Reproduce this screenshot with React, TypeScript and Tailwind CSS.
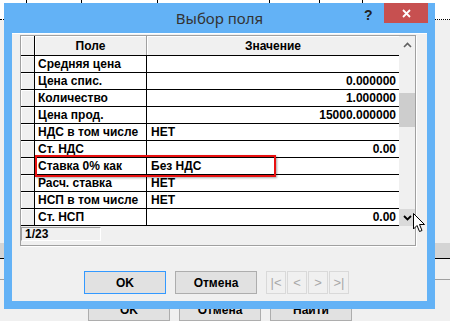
import React from "react";

const rows: [string, string, "l" | "r"][] = [
  ["Средняя цена", "", "l"],
  ["Цена спис.", "0.000000", "r"],
  ["Количество", "1.000000", "r"],
  ["Цена прод.", "15000.000000", "r"],
  ["НДС в том числе", "НЕТ", "l"],
  ["Ст. НДС", "0.00", "r"],
  ["Ставка 0% как", "Без НДС", "l"],
  ["Расч. ставка", "НЕТ", "l"],
  ["НСП в том числе", "НЕТ", "l"],
  ["Ст. НСП", "0.00", "r"],
];

const sans = "font-['Liberation_Sans',Arial,sans-serif]";

export default function App() {
  return (
    <div className={`relative w-[450px] h-[321px] overflow-hidden bg-[#f0f0f0] ${sans}`}>
      {/* background application */}
      <div className="flex flex-col">
        <div className="flex h-[20px] bg-white border-b border-dotted border-black">
          <div className="w-[27px] border-r border-black" />
          <div className="w-[55px] border-r border-black" />
          <div className="w-[76px] border-r border-black" />
          <div className="w-[112px] border-r border-black" />
          <div className="w-[50px] border-r border-black" />
          <div className="w-[43px] border-r border-black" />
          <div className="flex-1" />
        </div>
        <div className="h-[223px]" />
        <div className="h-[16px] bg-[#d4d4d4] border-b border-black" />
        <div className="h-[21px] border-b border-[#a0a0a0]" />
        <div className="flex gap-[9px] pl-[88px] pt-[18px] text-[12px] font-bold text-black">
          <div className="w-[82px] h-[23px] border border-[#adadad] bg-[#e1e1e1] flex items-center justify-center">OK</div>
          <div className="w-[82px] h-[23px] border border-[#adadad] bg-[#e1e1e1] flex items-center justify-center">Отмена</div>
          <div className="w-[82px] h-[23px] border border-[#adadad] bg-[#e1e1e1] flex items-center justify-center">Найти</div>
        </div>
      </div>

      {/* dialog window */}
      <div className="absolute left-[4px] top-[3px] w-[431px] h-[306px] bg-[#63b2f6] flex flex-col">
        <div className="relative h-[30px] flex items-center justify-center">
          <span className="font-['Noto_Sans',sans-serif] text-[15px] text-[#333] pt-[1px]">Выбор поля</span>
          <span className="absolute left-[360px] top-[2px] text-[14px] font-bold text-[#222]">?</span>
          <div className="absolute left-[380px] top-0 w-[44px] h-[20px] bg-[#c75050] flex items-center justify-center">
            <svg width="9" height="9" viewBox="0 0 9 9">
              <path d="M1 1 L8 8 M8 1 L1 8" stroke="#fff" strokeWidth="1.8" />
            </svg>
          </div>
        </div>
        <div className="mx-[8px] h-[268px] bg-[#f0f0f0] shadow-[inset_0_1px_0_#fff] flex flex-col pt-[2px] pl-[8px]">
          {/* grid frame */}
          <div className="relative w-[396px] h-[211px] border border-[#a0a0a0] shadow-[1px_1px_0_#fff] flex flex-col">
            <div className="flex h-[190px]">
              <div className="w-[378px] flex flex-col text-[12px] font-bold text-black leading-[16px]">
                <div className="flex h-[20px] border-b border-black bg-[#f0f0f0]">
                  <div className="w-[14px] border-r border-black shadow-[inset_1px_1px_0_#fff]" />
                  <div className="w-[112px] border-r border-[#a0a0a0] shadow-[inset_1px_1px_0_#fff] flex items-center justify-center">Поле</div>
                  <div className="flex-1 flex items-center justify-center shadow-[inset_1px_1px_0_#fff]">Значение</div>
                </div>
                {rows.map(([n, v, a], i) => (
                  <div key={i} className="flex h-[17px] border-b border-black">
                    <div className="w-[14px] bg-[#f0f0f0] border-r border-black shadow-[inset_1px_1px_0_#fff]" />
                    <div className="w-[112px] bg-white border-r border-black pl-[3px] flex items-center whitespace-nowrap">{n}</div>
                    <div className={`flex-1 bg-white flex items-center whitespace-nowrap ${a === "r" ? "justify-end pr-[3px]" : "pl-[4px]"}`}>{v}</div>
                  </div>
                ))}
              </div>
              {/* scrollbar */}
              <div className="w-[16px] flex flex-col bg-[#f0f0f0]">
                <div className="h-[17px] flex items-center justify-center">
                  <svg width="9" height="6" viewBox="0 0 9 6">
                    <path d="M1 5 L4.5 1.5 L8 5" stroke="#606060" strokeWidth="1.6" fill="none" />
                  </svg>
                </div>
                <div className="flex-1">
                  <div className="mt-[40px] h-[34px] bg-[#cdcdcd]" />
                </div>
                <div className="h-[17px] bg-[#dadada] flex items-center justify-center">
                  <svg width="9" height="6" viewBox="0 0 9 6">
                    <path d="M1 1 L4.5 4.5 L8 1" stroke="#000" strokeWidth="1.8" fill="none" />
                  </svg>
                </div>
              </div>
            </div>
            {/* footer */}
            <div className="flex-1 pt-[1px]">
              <div className="w-[80px] h-[14px] border-t border-l border-[#a0a0a0] border-b border-r border-b-white border-r-white flex items-center pl-[3px] text-[12px] font-bold leading-[12px]">1/23</div>
            </div>
            {/* highlight */}
            <div className="absolute left-[14px] top-[119px] w-[241px] h-[22px] border-2 border-[#e81010] shadow-[1px_1px_2px_rgba(0,0,0,0.35)]" />
          </div>
          {/* buttons */}
          <div className="flex mt-[25px] pl-[64px] text-[12px]">
            <div className="w-[82px] h-[23px] border border-[#3399ff] bg-[#e1e1e1] flex items-center justify-center font-bold">OK</div>
            <div className="ml-[9px] w-[82px] h-[23px] border border-[#adadad] bg-[#e1e1e1] flex items-center justify-center font-bold">Отмена</div>
            <div className="ml-[9px] flex gap-[1px] text-[#a8a8a8] text-[13px]">
              <div className="w-[20px] h-[23px] border border-[#d9d9d9] flex items-center justify-center">|&lt;</div>
              <div className="w-[20px] h-[23px] border border-[#d9d9d9] flex items-center justify-center">&lt;</div>
              <div className="w-[20px] h-[23px] border border-[#d9d9d9] flex items-center justify-center">&gt;</div>
              <div className="w-[20px] h-[23px] border border-[#d9d9d9] flex items-center justify-center">&gt;|</div>
            </div>
          </div>
        </div>
      </div>

      {/* mouse cursor */}
      <svg className="absolute left-[413px] top-[213px]" width="13" height="20" viewBox="0 0 13 20">
        <path d="M0.5 0.5 L0.5 16 L4 12.5 L6.5 18.5 L9 17.5 L6.5 11.5 L11.5 11.5 Z" fill="#fff" stroke="#000" strokeWidth="1" />
      </svg>
    </div>
  );
}
